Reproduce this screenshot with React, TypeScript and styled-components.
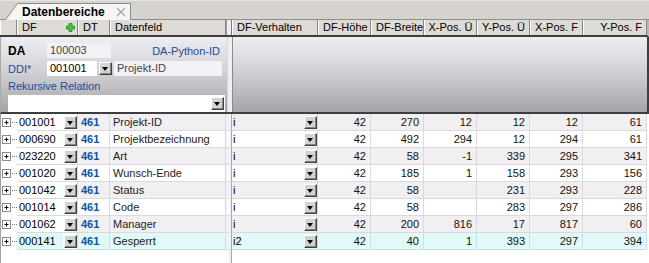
import React from 'react';
import styled, { createGlobalStyle } from 'styled-components';

const GlobalStyle = createGlobalStyle`
  html, body { margin: 0; padding: 0; background: #ffffff; }
  body {
    font-family: "Liberation Sans", Arial, sans-serif;
    font-size: 11px;
    color: #000;
  }
  * { box-sizing: border-box; }
`;

const COLS = '17px 61px 32px 116px 6px 86px 53px 53px 53px 53px 53px 64px';
const BLUE = '#1d4c9b';

const Frame = styled.div`
  width: 649px;
  height: 263px;
  overflow: hidden;
  display: flex;
  flex-direction: column;
  background: #fff;
`;

const TabStrip = styled.div`
  flex: none;
  height: 20px;
  background: #d6d3ce;
  border-top: 1px solid #e6e4e0;
  border-bottom: 1px solid #8e8e8e;
  display: flex;
  align-items: flex-end;
  padding-left: 5px;
`;

const Tab = styled.div`
  position: relative;
  width: 126px;
  height: 17px;
  margin-bottom: -1px;
  display: flex;
  align-items: center;
  padding-left: 17px;
  padding-right: 5px;
`;

const TabShape = styled.svg`
  position: absolute;
  left: 0;
  top: 0;
  width: 126px;
  height: 17px;
`;

const TabLabel = styled.span`
  position: relative;
  font-weight: bold;
  font-size: 12px;
  line-height: 15px;
  padding-top: 1px;
`;

const TabClose = styled.svg`
  position: relative;
  margin-left: auto;
  width: 10px;
  height: 10px;
`;

const HeaderRow = styled.div`
  flex: none;
  display: grid;
  grid-template-columns: ${COLS};
  height: 17px;
  border-bottom: 2px solid #3e3e3e;
  border-right: 2px solid #b8b8b8;
  width: 649px;
`;

const HeaderCell = styled.div<{ $align?: 'left' | 'right' | 'center' }>`
  display: flex;
  align-items: center;
  justify-content: ${(p) => (p.$align === 'right' ? 'flex-end' : p.$align === 'center' ? 'center' : 'flex-start')};
  background: #dedad5;
  border-left: 1px solid #ffffff;
  border-right: 1px solid #858585;
  padding: 0 4px;
  line-height: 15px;
  white-space: nowrap;
  overflow: hidden;
  color: #000;
`;

const HeaderSplit = styled.div`
  background: #eeecf0;
  border-left: 1px solid #9a9a9a;
  border-right: 1px solid #7a7a7a;
`;

const PlusIcon = styled.svg`
  margin-left: auto;
  margin-right: -2px;
  width: 9px;
  height: 9px;
`;

const Band = styled.div`
  flex: none;
  height: 77px;
  display: grid;
  grid-template-columns: 226px 6px 1fr;
  background: linear-gradient(180deg, #eeedf1 0%, #d2d1d6 45%, #a5a4a9 100%);
  border-bottom: 2px solid #3e3e3e;
  border-right: 2px solid #3e3e3e;
  border-left: 1px solid #a9a9a9;
`;

const BandSplit = styled.div`
  background: #f1eff4;
  border-left: 1px solid #d8d6dc;
  border-right: 1px solid #8c8c90;
`;

const Form = styled.div`
  display: flex;
  flex-direction: column;
  padding: 6px 2px 0 7px;
`;

const FieldRow = styled.div<{ $mt?: number }>`
  display: flex;
  align-items: center;
  height: 15px;
  margin-top: ${(p) => p.$mt ?? 0}px;
`;

const Label = styled.span<{ $bold?: boolean; $blue?: boolean }>`
  width: 39px;
  flex: none;
  font-size: ${(p) => (p.$bold ? '12px' : '11px')};
  font-weight: ${(p) => (p.$bold ? 'bold' : 'normal')};
  color: ${(p) => (p.$blue ? BLUE : '#000')};
  white-space: nowrap;
`;

const Link = styled.span`
  margin-left: auto;
  padding-right: 5px;
  color: ${BLUE};
  white-space: nowrap;
`;

const Box = styled.div<{ $w: number; $ro?: boolean }>`
  width: ${(p) => p.$w}px;
  height: 15px;
  flex: none;
  background: ${(p) => (p.$ro ? '#f3f1f5' : '#ffffff')};
  color: ${(p) => (p.$ro ? '#444' : '#000')};
  padding-left: 3px;
  line-height: 15px;
  white-space: nowrap;
  overflow: hidden;
`;

const Gap = styled.span`
  width: 2px;
  flex: none;
`;

const DropButton = styled.div<{ $sel?: boolean }>`
  flex: none;
  width: 13px;
  height: 13px;
  position: relative;
  background: ${(p) => (p.$sel ? '#c9d3d0' : '#d6d3ce')};
  border-top: 1px solid #ffffff;
  border-left: 1px solid #ffffff;
  border-right: 1px solid #404040;
  border-bottom: 1px solid #404040;
  box-shadow: inset -1px -1px 0 #848484;
  &::after {
    content: '';
    position: absolute;
    left: 2px;
    top: 4px;
    border-left: 3.5px solid transparent;
    border-right: 3.5px solid transparent;
    border-top: 4px solid #000;
  }
`;

const WideCombo = styled.div`
  width: 217px;
  height: 17px;
  margin-top: 2px;
  background: #ffffff;
  display: flex;
  align-items: center;
  justify-content: flex-end;
  padding-right: 1px;
`;

const BandRight = styled.div``;

const Body = styled.div`
  flex: 1;
  display: flex;
  flex-direction: column;
`;

const Row = styled.div<{ $v: 'odd' | 'even' | 'sel' }>`
  --row-bg: ${(p) => (p.$v === 'odd' ? '#f2eff2' : p.$v === 'sel' ? '#e0fafa' : '#ffffff')};
  --row-line: ${(p) => (p.$v === 'sel' ? '#c3e3e3' : '#dcd9dc')};
  display: grid;
  grid-template-columns: ${COLS};
  height: 17px;
  width: 649px;
`;

const Cell = styled.div`
  background: var(--row-bg);
  border-bottom: 1px solid var(--row-line);
  border-right: 1px solid var(--row-line);
  display: flex;
  align-items: center;
  white-space: nowrap;
  overflow: hidden;
  color: #111;
`;

const TreeCell = styled.div`
  background: #ffffff;
  border-left: 1px solid #a0a0a0;
  display: flex;
  align-items: center;
`;

const DfCell = styled(Cell)`
  background: #ffffff;
  gap: 1px;
  border-right: 1px solid #e0dde0;
`;

const DfText = styled.div<{ $sel?: boolean }>`
  width: 46px;
  height: 16px;
  line-height: 16px;
  padding-left: 2px;
  color: #000;
  background: ${(p) => (p.$sel ? '#e0fafa' : '#ffffff')};
`;

const DtCell = styled(Cell)`
  padding-left: 3px;
  color: #0a55a5;
  font-weight: bold;
`;

const TextCell = styled(Cell)`
  padding-left: 3px;
  color: #222;
`;

const SplitCell = styled.div`
  background: var(--row-bg);
  border-bottom: 1px solid var(--row-line);
  border-left: 1px solid #f4f2f6;
  border-right: 1px solid #a8a6aa;
  box-shadow: inset -2px 0 0 #f6f4f8;
`;

const BehaviorCell = styled(Cell)`
  padding-left: 1px;
  justify-content: space-between;
  padding-right: 0;
  color: #000;
`;

const NumCell = styled(Cell)`
  justify-content: flex-end;
  padding-right: 4px;
`;

const Filler = styled.div`
  flex: 1;
  display: grid;
  grid-template-columns: 226px 6px 1fr;
`;

const FillLeft = styled.div`
  border-left: 1px solid #a0a0a0;
`;

const FillSplit = styled.div`
  border-left: 1px solid #f4f2f6;
  border-right: 1px solid #a8a6aa;
  box-shadow: inset -2px 0 0 #f0eef2;
`;

type RowData = {
  df: string;
  name: string;
  beh: string;
  h: string;
  w: string;
  xu: string;
  yu: string;
  xf: string;
  yf: string;
};

const rows: RowData[] = [
  { df: '001001', name: 'Projekt-ID', beh: 'i', h: '42', w: '270', xu: '12', yu: '12', xf: '12', yf: '61' },
  { df: '000690', name: 'Projektbezeichnung', beh: 'i', h: '42', w: '492', xu: '294', yu: '12', xf: '294', yf: '61' },
  { df: '023220', name: 'Art', beh: 'i', h: '42', w: '58', xu: '-1', yu: '339', xf: '295', yf: '341' },
  { df: '001020', name: 'Wunsch-Ende', beh: 'i', h: '42', w: '185', xu: '1', yu: '158', xf: '293', yf: '156' },
  { df: '001042', name: 'Status', beh: 'i', h: '42', w: '58', xu: '', yu: '231', xf: '293', yf: '228' },
  { df: '001014', name: 'Code', beh: 'i', h: '42', w: '58', xu: '', yu: '283', xf: '297', yf: '286' },
  { df: '001062', name: 'Manager', beh: 'i', h: '42', w: '200', xu: '816', yu: '17', xf: '817', yf: '60' },
  { df: '000141', name: 'Gesperrt', beh: 'i2', h: '42', w: '40', xu: '1', yu: '393', xf: '297', yf: '394' },
];

const TreeIcon = () => (
  <svg width="16" height="16" viewBox="0 0 16 16">
    <rect x="1.5" y="3.5" width="8" height="8" fill="#fff" stroke="#8a8a8a" />
    <path d="M3.5 7.5h4M5.5 5.5v4" stroke="#000" />
    <path d="M11 7.5h5" stroke="#777" strokeDasharray="1 1" />
  </svg>
);

export default function App() {
  return (
    <>
      <GlobalStyle />
      <Frame>
        <TabStrip>
          <Tab>
            <TabShape viewBox="0 0 126 17">
              <path d="M0 17.5 L12.5 0.5 H125.5 V17.5" fill="#f6f5f3" stroke="#8a8a8a" />
            </TabShape>
            <TabLabel>Datenbereiche</TabLabel>
            <TabClose viewBox="0 0 10 10">
              <path d="M1 1 L9 9 M9 1 L1 9" stroke="#a4a4a4" strokeWidth="1.3" />
            </TabClose>
          </Tab>
        </TabStrip>

        <HeaderRow>
          <HeaderCell />
          <HeaderCell>
            DF
            <PlusIcon viewBox="0 0 9 9">
              <path d="M3 0.5h3v2.5h2.5v3H6v2.5H3V6H0.5V3H3z" fill="#3ec43e" stroke="#1f8f1f" strokeWidth="0.8" />
            </PlusIcon>
          </HeaderCell>
          <HeaderCell>DT</HeaderCell>
          <HeaderCell>Datenfeld</HeaderCell>
          <HeaderSplit />
          <HeaderCell>DF-Verhalten</HeaderCell>
          <HeaderCell>DF-Höhe</HeaderCell>
          <HeaderCell>DF-Breite</HeaderCell>
          <HeaderCell $align="center">X-Pos. Ü</HeaderCell>
          <HeaderCell $align="center">Y-Pos. Ü</HeaderCell>
          <HeaderCell $align="center">X-Pos. F</HeaderCell>
          <HeaderCell $align="right">Y-Pos. F</HeaderCell>
        </HeaderRow>

        <Band>
          <Form>
            <FieldRow>
              <Label $bold>DA</Label>
              <Box $w={64} $ro>100003</Box>
              <Link>DA-Python-ID</Link>
            </FieldRow>
            <FieldRow $mt={3}>
              <Label $blue>DDI*</Label>
              <Box $w={50}>001001</Box>
              <Gap />
              <DropButton />
              <Gap />
              <Box $w={108} $ro>Projekt-ID</Box>
            </FieldRow>
            <FieldRow $mt={2}>
              <Label $blue>Rekursive Relation</Label>
            </FieldRow>
            <WideCombo>
              <DropButton />
            </WideCombo>
          </Form>
          <BandSplit />
          <BandRight />
        </Band>

        <Body>
          {rows.map((r, i) => {
            const v = i === 7 ? 'sel' : i % 2 === 0 ? 'odd' : 'even';
            const sel = v === 'sel';
            return (
              <Row key={r.df} $v={v}>
                <TreeCell>
                  <TreeIcon />
                </TreeCell>
                <DfCell>
                  <DfText $sel={sel}>{r.df}</DfText>
                  <DropButton $sel={sel} />
                </DfCell>
                <DtCell>461</DtCell>
                <TextCell>{r.name}</TextCell>
                <SplitCell />
                <BehaviorCell>
                  <span>{r.beh}</span>
                  <DropButton $sel={sel} />
                </BehaviorCell>
                <NumCell>{r.h}</NumCell>
                <NumCell>{r.w}</NumCell>
                <NumCell>{r.xu}</NumCell>
                <NumCell>{r.yu}</NumCell>
                <NumCell>{r.xf}</NumCell>
                <NumCell>{r.yf}</NumCell>
              </Row>
            );
          })}
          <Filler>
            <FillLeft />
            <FillSplit />
            <div />
          </Filler>
        </Body>
      </Frame>
    </>
  );
}
